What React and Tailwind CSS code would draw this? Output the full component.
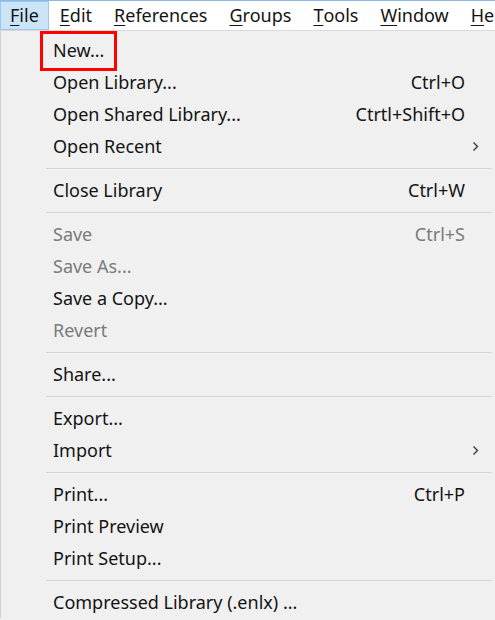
import React from "react";

const font = { fontFamily: '"Noto Sans", "Open Sans", Arial, sans-serif' };

function Chevron() {
  return (
    <svg width="7" height="11" viewBox="0 0 7 11" className="block">
      <path d="M1.5 1.5 L5.5 5.5 L1.5 9.5" fill="none" stroke="#3a3a3a" strokeWidth="1.4" />
    </svg>
  );
}

function Item({ label, shortcut, disabled, sub }) {
  return (
    <div className="flex h-[32px] items-center pl-[52px] pr-[30px]">
      <span className={disabled ? "flex-1 text-[#7a7a7a]" : "flex-1 text-[#141414]"}>{label}</span>
      {shortcut && (
        <span className={disabled ? "text-[#7a7a7a]" : "text-[#141414]"}>{shortcut}</span>
      )}
      {sub && (
        <span className="-mr-[14px]">
          <Chevron />
        </span>
      )}
    </div>
  );
}

function Sep() {
  return (
    <div className="flex h-[12px] items-center pl-[45px] pr-[3px]">
      <div className="h-px w-full bg-[#d5d5d5]" />
    </div>
  );
}

function MenuTitle({ first, rest, active }) {
  return (
    <div
      className={
        active
          ? "flex h-full items-center px-[9px] bg-[#cce4f7] border border-[#99c9ef]"
          : "flex h-full items-center px-[10px] border border-transparent"
      }
    >
      <span className="underline underline-offset-[3px] decoration-1">{first}</span>
      <span>{rest}</span>
    </div>
  );
}

export default function App() {
  return (
    <div
      className="relative w-[495px] h-[620px] overflow-hidden bg-[#f0f0f0] text-[18px] text-[#141414]"
      style={font}
    >
      <div className="flex h-[31px] bg-white border-t border-t-[#8db8e4] border-b border-b-[#d9d9d9] whitespace-nowrap">
        <MenuTitle first="F" rest="ile" active />
        <MenuTitle first="E" rest="dit" />
        <MenuTitle first="R" rest="eferences" />
        <MenuTitle first="G" rest="roups" />
        <MenuTitle first="T" rest="ools" />
        <MenuTitle first="W" rest="indow" />
        <MenuTitle first="H" rest="elp" />
      </div>
      <div className="flex flex-col pt-[3px] border-l border-l-[#d0d0d0] whitespace-nowrap">
        <Item label="New..." />
        <Item label="Open Library..." shortcut="Ctrl+O" />
        <Item label="Open Shared Library..." shortcut="Ctrtl+Shift+O" />
        <Item label="Open Recent" sub />
        <Sep />
        <Item label="Close Library" shortcut="Ctrl+W" />
        <Sep />
        <Item label="Save" shortcut="Ctrl+S" disabled />
        <Item label="Save As..." disabled />
        <Item label="Save a Copy..." />
        <Item label="Revert" disabled />
        <Sep />
        <Item label="Share..." />
        <Sep />
        <Item label="Export..." />
        <Item label="Import" sub />
        <Sep />
        <Item label="Print..." shortcut="Ctrl+P" />
        <Item label="Print Preview" />
        <Item label="Print Setup..." />
        <Sep />
        <Item label="Compressed Library (.enlx) ..." />
      </div>
      <div className="absolute left-[40px] top-[31px] w-[77px] h-[40px] border-[3px] border-[#ff0000]" />
    </div>
  );
}
